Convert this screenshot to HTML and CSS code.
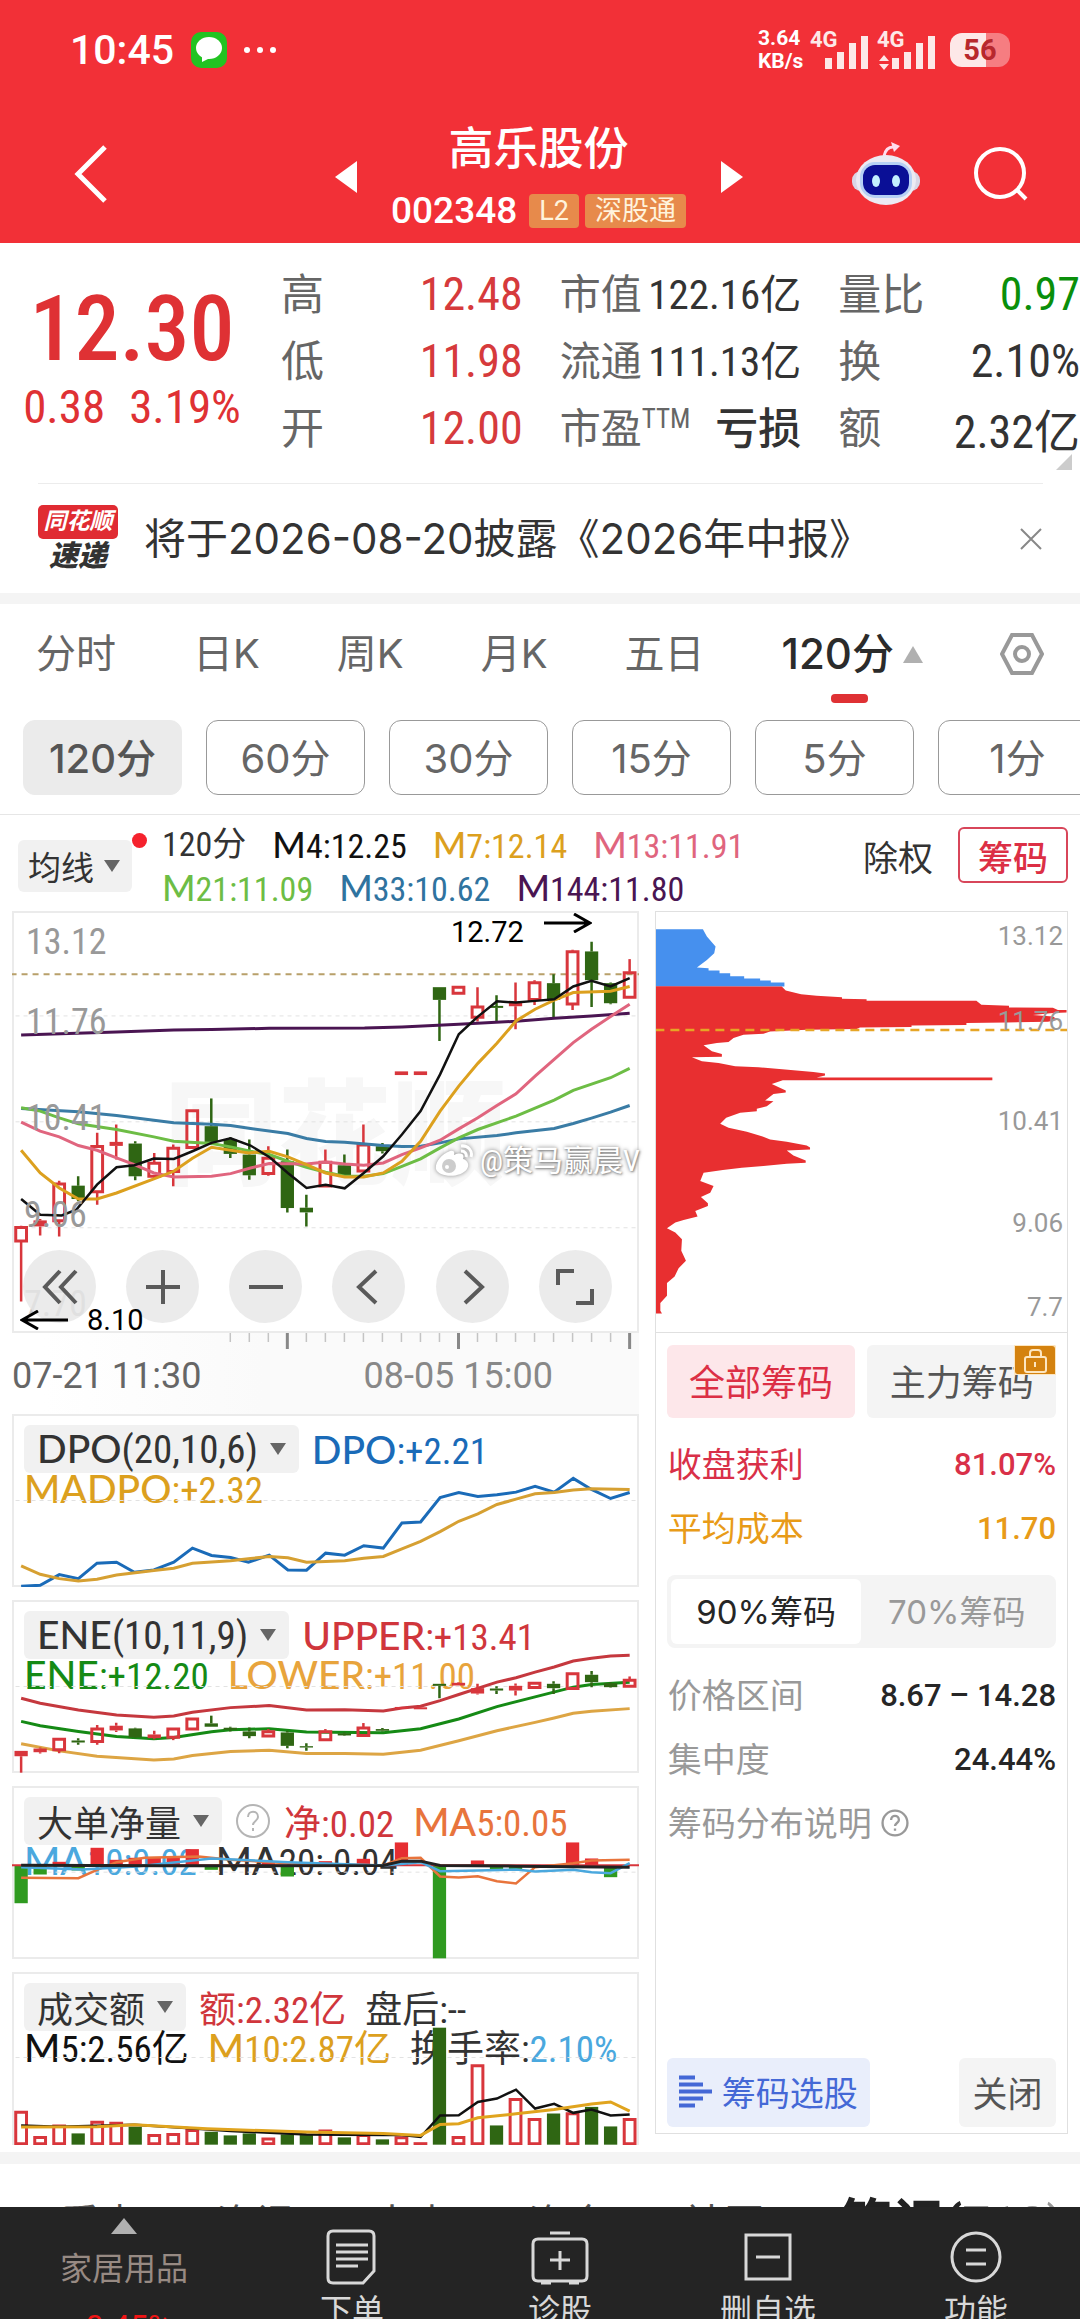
FILE: index.html
```
<!DOCTYPE html>
<html lang="zh-CN">
<head>
  <meta charset="UTF-8" />
  <meta name="viewport" content="width=device-width, initial-scale=1" />
  <title>高乐股份 002348</title>
  <link rel="stylesheet" href="styles.css">
</head>
<body>
  <header class="top">
    <div class="status">
      <div class="status-left">
        <span class="clock">10:45</span>
        <svg class="msg" viewBox="0 0 36 36"><rect width="36" height="36" rx="10" fill="#22c322"/><ellipse cx="18" cy="16" rx="13" ry="11" fill="#fff"/><path d="M11 23l0 7 8-4z" fill="#fff"/></svg>
        <svg class="dots" viewBox="0 0 32 6"><circle cx="3" cy="3" r="3"/><circle cx="16" cy="3" r="3"/><circle cx="29" cy="3" r="3"/></svg>
      </div>
      <div class="status-right">
        <span class="speed">3.64<br>KB/s</span>
        <svg class="signal" viewBox="0 0 58 40">
          <text x="0" y="17">4G</text>
          <path d="M15 28h7v11h-7zM27 22h7v17h-7zM39 13h7v26h-7zM51 6h7v33h-7z"/>
        </svg>
        <svg class="signal" viewBox="0 0 58 40">
          <text x="0" y="17">4G</text>
          <path d="M7 25l5 6H2zM7 40l5-6H2zM15 28h7v11h-7zM27 22h7v17h-7zM39 13h7v26h-7zM51 6h7v33h-7z"/>
        </svg>
        <div class="battery"><span>56</span></div>
      </div>
    </div>
    <div class="title-bar">
      <button class="icon-btn back" aria-label="返回"><svg viewBox="0 0 34 58"><path d="M31 2L4 29l27 27"/></svg></button>
      <div class="stock">
        <button class="icon-btn" aria-label="上一只"><svg class="arrow" viewBox="0 0 22 32"><path d="M22 0v32L0 16z"/></svg></button>
        <div class="stock-name">
          <h1>高乐股份</h1>
          <div class="code"><span>002348</span><em>L2</em><em>深股通</em></div>
        </div>
        <button class="icon-btn" aria-label="下一只"><svg class="arrow" viewBox="0 0 22 32"><path d="M0 0v32l22-16z"/></svg></button>
      </div>
      <div class="tools">
        <button class="icon-btn" aria-label="助手">
          <svg class="robot" viewBox="0 0 70 64">
            <path d="M33 14q2-9 9-9" fill="none" stroke="#fde" stroke-width="3"/>
            <path d="M40 0l9 4-6 6z" fill="#fde"/>
            <rect x="1" y="29" width="68" height="20" rx="9" fill="#d9d6e6"/>
            <ellipse cx="35" cy="38" rx="30" ry="25" fill="#eceaf3"/>
            <rect x="9" y="20" width="52" height="36" rx="15" fill="#b6d0f5"/>
            <rect x="12" y="23" width="46" height="30" rx="12" fill="#0a0f96"/>
            <ellipse cx="25" cy="39" rx="4" ry="6" fill="#c4f0ff"/>
            <ellipse cx="45" cy="39" rx="4" ry="6" fill="#c4f0ff"/>
          </svg>
        </button>
        <button class="icon-btn" aria-label="搜索"><svg class="search" viewBox="0 0 56 56"><circle cx="27" cy="27" r="24"/><path d="M44 44l9 9"/></svg></button>
      </div>
    </div>
  </header>

  <section class="quote">
    <div class="price">
      <strong>12.30</strong>
      <div><span>0.38</span><span>3.19%</span></div>
    </div>
    <dl>
      <div><dt>高</dt><dd class="up">12.48</dd></div>
      <div><dt>低</dt><dd class="up">11.98</dd></div>
      <div><dt>开</dt><dd class="up">12.00</dd></div>
    </dl>
    <dl class="mid">
      <div><dt>市值</dt><dd>122.16亿</dd></div>
      <div><dt>流通</dt><dd>111.13亿</dd></div>
      <div><dt>市盈<sup>TTM</sup></dt><dd>亏损</dd></div>
    </dl>
    <dl>
      <div><dt>量比</dt><dd class="down">0.97</dd></div>
      <div><dt>换</dt><dd>2.10%</dd></div>
      <div><dt>额</dt><dd>2.32亿</dd></div>
    </dl>
    <i class="corner"></i>
  </section>

  <section class="notice">
    <div class="brand"><b>同花顺</b><i>速递</i></div>
    <p>将于2026-08-20披露《2026年中报》</p>
    <button class="icon-btn" aria-label="关闭提示"><svg viewBox="0 0 22 22"><path d="M1 1l20 20M21 1L1 21"/></svg></button>
  </section>

  <nav class="periods">
    <a href="#">分时</a><a href="#">日K</a><a href="#">周K</a><a href="#">月K</a><a href="#">五日</a>
    <a href="#" class="active">120分<i class="tri-up"></i></a>
    <button class="icon-btn" aria-label="设置"><svg viewBox="0 0 44 44"><path d="M12 3h20l10 19-10 19H12L2 22z"/><circle cx="22" cy="22" r="7"/></svg></button>
  </nav>
  <div class="chips">
    <button class="on">120分</button><button>60分</button><button>30分</button><button>15分</button><button>5分</button><button>1分</button>
  </div>

  <section class="ma-bar">
    <button class="drop ma-btn">均线<i class="tri-down"></i><i class="dot"></i></button>
    <div class="ma-list">
      <div><span>120分</span><span class="black"><b>M</b>4:12.25</span><span class="gold"><b>M</b>7:12.14</span><span class="pink"><b>M</b>13:11.91</span></div>
      <div><span class="lime"><b>M</b>21:11.09</span><span class="blue"><b>M</b>33:10.62</span><span class="purple"><b>M</b>144:11.80</span></div>
    </div>
    <button class="plain">除权</button>
    <button class="outlined">筹码</button>
  </section>

  <main class="board">
    <div class="charts">
      <div class="kline">
        <span class="wm">同花顺</span>
        <svg id="kline" viewBox="30 36 1511 1263" preserveAspectRatio="none"></svg>
        <span class="axis a1">13.12</span>
        <span class="axis a2">11.76</span>
        <span class="axis a3">10.41</span>
        <span class="axis a4">9.06</span>
        <span class="axis a5">7.70</span>
        <span class="mark high">12.72<svg viewBox="0 0 48 20"><path d="M0 10h46M30 1l16 9-16 9"/></svg></span>
        <div class="pad">
          <button aria-label="收起"><svg viewBox="0 0 40 40"><path d="M20 4L5 20l15 16M36 4L21 20l15 16"/></svg></button>
          <button aria-label="放大"><svg viewBox="0 0 40 40"><path d="M3 20h34M20 3v34"/></svg></button>
          <button aria-label="缩小"><svg viewBox="0 0 40 40"><path d="M3 20h34"/></svg></button>
          <button aria-label="左移"><svg viewBox="0 0 40 40"><path d="M27 4L10 20l17 16"/></svg></button>
          <button aria-label="右移"><svg viewBox="0 0 40 40"><path d="M13 4l17 16-17 16"/></svg></button>
          <button aria-label="全屏"><svg viewBox="0 0 40 40"><path d="M3 18V4h16M37 22v14H21"/></svg></button>
        </div>
        <span class="mark low"><svg viewBox="0 0 48 20"><path d="M48 10H2M18 1L2 10l16 9"/></svg>8.10</span>
        <span class="weibo"><svg viewBox="0 0 40 36"><path d="M16 8C6 12 1 20 2 26c2 8 24 10 31 0 3-5 0-9-4-10 2-5-2-7-9-4 1-4-1-5-4-4z"/><circle cx="15" cy="23" r="7" class="eye"/><circle cx="13" cy="24" r="2"/><path d="M27 3c7-1 12 5 10 11M27 8c4 0 6 3 5 6" class="wave"/></svg>@策马赢晨V</span>
      </div>
      <div class="time-axis">
        <svg id="ticks" viewBox="30 0 1511 60" preserveAspectRatio="none"></svg>
        <div><span>07-21 11:30</span><span>08-05 15:00</span></div>
      </div>

      <div class="panel">
        <div class="legend"><button class="drop latin"><span><b>DPO</b>(20,10,6)</span><i class="tri-down"></i></button><span class="azure"><b>DPO</b>:+2.21</span></div>
        <div class="legend"><span class="gold"><b>MADPO</b>:+2.32</span></div>
        <svg id="dpo" viewBox="30 42 1511 516" preserveAspectRatio="none"></svg>
      </div>
      <div class="panel">
        <div class="legend"><button class="drop latin"><span><b>ENE</b>(10,11,9)</span><i class="tri-down"></i></button><span class="red"><b>UPPER</b>:+13.41</span></div>
        <div class="legend"><span class="green"><b>ENE</b>:+12.20</span><span class="amber"><b>LOWER</b>:+11.00</span></div>
        <svg id="ene" viewBox="30 600 1511 516" preserveAspectRatio="none"></svg>
      </div>
      <div class="panel">
        <div class="legend"><button class="drop">大单净量<i class="tri-down"></i></button><svg class="help" viewBox="0 0 36 36"><circle cx="18" cy="18" r="16"/><path d="M13 14c0-7 10-7 10 0 0 4-5 4-5 8M18 25v3"/></svg><span class="red">净:0.02</span><span class="orange"><b>MA</b>5:0.05</span></div>
        <div class="legend"><span class="sky"><b>MA</b>10:0.02</span><span><b>MA</b>20:-0.04</span></div>
        <svg id="net" viewBox="30 47 1511 518" preserveAspectRatio="none"></svg>
      </div>
      <div class="panel last">
        <div class="legend"><button class="drop">成交额<i class="tri-down"></i></button><span class="red">额:2.32亿</span><span>盘后:--</span></div>
        <div class="legend"><span class="black"><b>M</b>5:2.56亿</span><span class="gold"><b>M</b>10:2.87亿</span><span>换手率:<span class="sky">2.10%</span></span></div>
        <svg id="vol" viewBox="30 605 1511 522" preserveAspectRatio="none"></svg>
      </div>
    </div>

    <aside class="chip-side">
      <div class="profile">
        <svg id="profile" viewBox="47 36 1236 1263" preserveAspectRatio="none"></svg>
        <span class="axis a1">13.12</span>
        <span class="axis a2">11.76</span>
        <span class="axis a3">10.41</span>
        <span class="axis a4">9.06</span>
        <span class="axis a5">7.7</span>
      </div>
      <div class="chip-body">
        <div class="chip-tabs">
          <button class="on">全部筹码</button>
          <button>主力筹码<svg class="lock" viewBox="0 0 42 30"><path d="M0 0h38a4 4 0 014 4v26H4a4 4 0 01-4-4z" fill="#d4820f"/><rect x="11" y="12" width="21" height="15" rx="2"/><path d="M16 12V8q0-3 3-3h5q3 0 3 3v4M21 17v5"/></svg></button>
        </div>
        <div class="row rose"><span>收盘获利</span><b>81.07%</b></div>
        <div class="row honey"><span>平均成本</span><b>11.70</b></div>
        <div class="seg"><button class="on">90%筹码</button><button>70%筹码</button></div>
        <div class="row"><span>价格区间</span><b>8.67 – 14.28</b></div>
        <div class="row"><span>集中度</span><b>24.44%</b></div>
        <div class="row explain"><span>筹码分布说明</span><svg class="help" viewBox="0 0 36 36"><circle cx="18" cy="18" r="16"/><path d="M13 14c0-7 10-7 10 0 0 4-5 4-5 8M18 25v3"/></svg></div>
        <div class="actions">
          <button class="pick"><svg viewBox="0 0 33 33"><path d="M0 2.500h16M0 9.500h24M0 16.500h33M0 23.500h24M0 30.500h16"/></svg>筹码选股</button>
          <button class="close">关闭</button>
        </div>
      </div>
    </aside>
  </main>

  <nav class="more">
    <a href="#">看点</a><a href="#">资讯</a><a href="#">大事</a><a href="#">资金</a><a href="#">社区</a><a href="#" class="active">笔记(<small>712)</small></a>
  </nav>

  <footer class="dock">
    <a href="#" class="sector"><i class="tri-up"></i><span>家居用品</span><em>-0.45%</em></a>
    <a href="#"><svg viewBox="0 0 54 56"><path d="M8 2h36q5 0 5 5v35L38 54H8q-5 0-5-5V7q0-5 5-5zM11 16h32M11 23h32M11 30h32M11 37h22"/></svg><span>下单</span></a>
    <a href="#"><svg viewBox="0 0 58 56"><path d="M19 4h20M7 10h44q5 0 5 5v32q0 5-5 5H7q-5 0-5-5V15q0-5 5-5zM29 22v19M19 31h20M10 54h10M38 54h10"/></svg><span>诊股</span></a>
    <a href="#"><svg viewBox="0 0 54 56"><path d="M5 6h44v44H5zM15 28h24"/></svg><span>删自选</span></a>
    <a href="#"><svg viewBox="0 0 54 56"><circle cx="27" cy="28" r="24"/><path d="M17 21h20M17 35h20"/></svg><span>功能</span></a>
  </footer>

  <script src="script.js"></script>
</body>
</html>
```
FILE: styles.css
```
* {
  box-sizing: border-box;
}

body {
  margin: 0;
  min-height: 100vh;
  overflow: hidden;
  background: #fff;
  color: #333;
  font-family: "Roboto Condensed", Roboto, "Noto Sans CJK SC", sans-serif;
}

h1, p, dl, dd {
  margin: 0;
}

button {
  border: none;
  background: none;
  padding: 0;
  color: inherit;
  font: inherit;
  cursor: pointer;
}

a {
  color: inherit;
  text-decoration: none;
}

em, i {
  font-style: normal;
}

svg {
  display: block;
  flex: none;
}

.icon-btn {
  flex: none;
}

/* Header */
.top {
  background: #f23037;
  color: #fff;
}

.status {
  display: flex;
  justify-content: space-between;
  align-items: center;
  height: 100px;
  padding: 0 70px;
  font-family: Roboto, sans-serif;
  font-weight: 500;
}

.status-left, .status-right {
  display: flex;
  align-items: center;
}

.status-left {
  gap: 17px;
}

.status-right {
  gap: 4px;
}

.clock {
  font-size: 41px;
}

.msg {
  width: 36px;
  height: 36px;
}

.dots {
  width: 32px;
  fill: #fff;
}

.speed {
  width: 48px;
  font-size: 21px;
  line-height: 23px;
  font-weight: 700;
  white-space: nowrap;
}

.signal {
  width: 58px;
  height: 40px;
  margin-right: 5px;
  overflow: visible;
  fill: #fde8e8;
  font: 700 22px Roboto, sans-serif;
}

.battery {
  width: 60px;
  height: 34px;
  margin-left: 6px;
  border-radius: 12px;
  background: linear-gradient(90deg, #fde8e8 60%, #f67d81 60%);
  color: #b8282d;
  text-align: center;
  font-size: 29px;
  line-height: 34px;
  font-weight: 700;
}

.title-bar {
  display: grid;
  grid-template-columns: 1fr 408px 1fr;
  align-items: center;
  height: 143px;
  padding: 5px 51px 0 74px;
}

.back {
  justify-self: start;
}

.back svg {
  width: 34px;
  height: 58px;
  fill: none;
  stroke: #fff;
  stroke-width: 5;
}

.stock {
  display: flex;
  justify-content: space-between;
  align-items: center;
  margin-left: -13px;
  margin-right: 13px;
}

.arrow {
  width: 22px;
  height: 32px;
  margin-top: 6px;
  fill: #fff;
}

.stock-name {
  text-align: center;
}

.stock-name h1 {
  font-size: 45px;
  line-height: 60px;
  font-weight: 500;
}

.code {
  display: flex;
  align-items: center;
  gap: 6px;
  margin-top: 13px;
  font: 500 37px/36px Roboto, sans-serif;
}

.code span {
  margin-right: 6px;
}

.code em {
  padding: 0 10px;
  border-radius: 4px;
  background: #e78a4b;
  color: #fff3dc;
  font: 400 27px/34px Roboto, "Noto Sans CJK SC", sans-serif;
}

.tools {
  display: flex;
  justify-content: flex-end;
  align-items: center;
  gap: 52px;
}

.robot {
  width: 70px;
  height: 64px;
}

.search {
  width: 56px;
  height: 56px;
  fill: none;
  stroke: #fff;
  stroke-width: 4;
}

/* Quote */
.quote {
  position: relative;
  display: flex;
  gap: 37px;
  padding: 17px 0 23px;
}

.quote::after {
  content: "";
  position: absolute;
  left: 38px;
  right: 37px;
  bottom: 0;
  border-bottom: 1px solid #ececec;
}

.price {
  width: 244px;
  padding: 20px 0 0 20px;
  color: #df3134;
  text-align: center;
  white-space: nowrap;
}

.price strong {
  display: block;
  font-size: 90px;
  line-height: 100px;
  font-weight: 500;
}

.price div {
  display: flex;
  justify-content: center;
  gap: 24px;
  font-size: 47px;
  line-height: 54px;
}

.quote dl {
  flex: 1;
}

.quote dl div {
  display: flex;
  justify-content: space-between;
  align-items: center;
  height: 67px;
  white-space: nowrap;
}

.quote dt {
  padding-bottom: 6px;
  color: #666;
  font-size: 43px;
}

.quote dd {
  font-size: 46px;
}

.mid dt {
  font-size: 41px;
}

.quote .mid dd {
  padding-bottom: 6px;
  font-size: 41px;
}

.quote .mid div:last-child dd {
  font-size: 43px;
  font-weight: 500;
}

.quote sup {
  font-size: 27px;
  line-height: 0;
}

.quote .up {
  color: #d63a3c;
}

.quote .down {
  color: #0a8f0a;
}

.corner {
  position: absolute;
  right: 8px;
  bottom: 14px;
  border-left: 16px solid transparent;
  border-bottom: 16px solid #ccc;
}

/* Notice */
.notice {
  display: flex;
  align-items: center;
  height: 120px;
  padding: 0 38px;
  border-bottom: 11px solid #f4f4f4;
}

.brand {
  width: 80px;
  margin-right: 26px;
  text-align: center;
  white-space: nowrap;
}

.brand b {
  display: block;
  border-radius: 5px;
  background: #e02b32;
  color: #fff;
  font-size: 23px;
  line-height: 34px;
  font-weight: 700;
  font-style: italic;
}

.brand i {
  display: block;
  font-size: 29px;
  line-height: 34px;
  font-weight: 900;
  font-style: italic;
}

.notice p {
  flex: 1;
  font: 42px/60px Inter, "Noto Sans CJK SC", sans-serif;
}

.notice svg {
  width: 22px;
  height: 22px;
  stroke: #888;
  stroke-width: 2;
}

/* Period tabs */
.periods {
  display: flex;
  justify-content: space-between;
  align-items: center;
  height: 98px;
  padding: 2px 36px 0;
  color: #666;
  font: 40px/56px Inter, "Noto Sans CJK SC", sans-serif;
}

.periods .active {
  position: relative;
  display: flex;
  align-items: center;
  gap: 9px;
  color: #2b2b2b;
  font-size: 42px;
  font-weight: 500;
}

.periods .active::after {
  content: "";
  position: absolute;
  left: 49px;
  bottom: -21px;
  width: 37px;
  height: 9px;
  border-radius: 4px;
  background: #df3134;
}

.periods svg {
  width: 44px;
  height: 44px;
  fill: none;
  stroke: #999;
  stroke-width: 4;
}

.tri-up {
  border: 10px solid transparent;
  border-top: none;
  border-bottom: 17px solid #b0b0b0;
}

.tri-down {
  border: 8px solid transparent;
  border-bottom: none;
  border-top: 12px solid #666;
}

.chips {
  display: flex;
  gap: 24px;
  padding: 18px 0 19px 23px;
  overflow: hidden;
  border-bottom: 1px solid #e6e6e6;
}

.chips button {
  flex: none;
  width: 159px;
  height: 75px;
  padding-top: 2px;
  border: 1px solid #999;
  border-radius: 12px;
  color: #666;
  font: 40px/56px Inter, "Noto Sans CJK SC", sans-serif;
}

.chips .on {
  border-color: #ebebeb;
  background: #ebebeb;
  color: #555;
  font-weight: 500;
}

/* Moving average legend */
.ma-bar {
  display: flex;
  align-items: flex-start;
  height: 96px;
  padding: 9px 12px 0 18px;
  white-space: nowrap;
}

.drop {
  display: flex;
  align-items: center;
  gap: 12px;
  border-radius: 6px;
  background: #f1f1f1;
}

.ma-btn {
  position: relative;
  width: 114px;
  height: 52px;
  margin: 16px 30px 0 0;
  padding-left: 10px;
  gap: 10px;
  font-size: 33px;
}

.dot {
  position: absolute;
  right: -15px;
  top: -7px;
  width: 15px;
  height: 15px;
  border-radius: 50%;
  background: #f5222d;
}

.ma-list {
  flex: 1;
  font-size: 34px;
  line-height: 41px;
}

.ma-list div {
  display: flex;
  gap: 26px;
}

.ma-list b, .panel b {
  font-family: Lato, sans-serif;
  font-weight: 500;
}

.ma-list b {
  font-size: 36px;
}

.panel b {
  font-size: 39px;
}

.plain, .outlined {
  height: 56px;
  margin-top: 3px;
  font-size: 35px;
}

.outlined {
  width: 110px;
  margin-left: 25px;
  border: 2px solid #d8465a;
  border-radius: 6px;
  color: #dc2f45;
  font-weight: 500;
}

.black { color: #111; }
.gold { color: #dca01e; }
.pink { color: #e0657e; }
.lime { color: #6dbd45; }
.blue { color: #2f739f; }
.purple { color: #4a1552; }
.azure { color: #1a6bb8; }
.red { color: #d0363c; }
.green { color: #158a15; }
.amber { color: #e8a43c; }
.orange { color: #e8743c; }
.sky { color: #4aa8de; }

/* Charts */
.board {
  display: flex;
  gap: 16px;
  padding: 0 12px 7px;
  border-bottom: 12px solid #f4f4f4;
}

.charts {
  flex: 628 1 0;
  min-width: 0;
}

.kline, .panel {
  position: relative;
  border: 2px solid #ebebeb;
}

.kline {
  height: 422px;
}

.kline > svg, .panel > svg {
  position: absolute;
  left: -2px;
  top: -2px;
  width: calc(100% + 4px);
  height: calc(100% + 4px);
  pointer-events: none;
}

.profile > svg {
  position: absolute;
  left: 0;
  top: 0;
  width: 100%;
  height: 100%;
}

.panel.last > svg {
  height: calc(100% + 2px);
}

.wm {
  position: absolute;
  left: 150px;
  top: 130px;
  color: #f7f7f7;
  font-size: 114px;
  font-weight: 900;
}

.axis {
  position: absolute;
  color: #999;
  font-size: 36px;
  line-height: 40px;
}

.kline .axis { left: 12px; }
.kline .a4, .kline .a5 { left: 10px; }
.kline .a5 { color: #c8c8c8; }
.axis.a1 { top: 9px; }
.axis.a2 { top: 89px; }
.axis.a3 { top: 185px; }
.axis.a4 { top: 282px; }
.axis.a5 { top: 371px; }

.mark {
  position: absolute;
  display: flex;
  align-items: center;
  color: #000;
  font: 29px/34px Roboto, sans-serif;
}

.mark svg {
  width: 48px;
  height: 20px;
  fill: none;
  stroke: #000;
  stroke-width: 3;
}

.high {
  left: 437px;
  top: 0;
  gap: 20px;
}

.high svg {
  margin-bottom: 18px;
}

.low {
  left: 6px;
  bottom: -6px;
  gap: 19px;
}

.pad {
  position: absolute;
  left: 9px;
  right: 25px;
  bottom: 8px;
  display: flex;
  justify-content: space-between;
}

.pad button {
  display: grid;
  place-items: center;
  width: 73px;
  height: 73px;
  border-radius: 50%;
  background: rgba(230, 230, 230, 0.8);
}

.pad svg {
  width: 40px;
  height: 40px;
  fill: none;
  stroke: #5a5a5a;
  stroke-width: 4;
}

.weibo {
  position: absolute;
  right: -3px;
  top: 228px;
  display: flex;
  align-items: center;
  gap: 6px;
  color: #fff;
  font-size: 30px;
  line-height: 40px;
  text-shadow: 0 0 4px #777, 1px 1px 2px #999;
}

.weibo svg {
  width: 40px;
  height: 36px;
  fill: #fff;
  filter: drop-shadow(0 0 2px #888);
}

.weibo .eye {
  fill: #ccc;
}

.weibo .wave {
  fill: none;
  stroke: #fff;
  stroke-width: 3;
}

.time-axis {
  height: 81px;
  color: #666;
  background: linear-gradient(90deg, #fff 5%, #fafafa 40%);
}

.time-axis svg {
  width: 100%;
  height: 20px;
}

.time-axis div {
  display: flex;
  gap: 162px;
  padding-top: 1px;
  font: 36px/44px Roboto, sans-serif;
}

.time-axis span + span {
  color: #888;
}

.panel {
  height: 173px;
  margin-bottom: 13px;
  padding: 9px 0 0 10px;
}

.panel.last {
  margin-bottom: 0;
  border-bottom: none;
}

.legend {
  display: flex;
  align-items: center;
  gap: 19px;
  height: 30px;
  font-size: 37px;
  white-space: nowrap;
}

.legend:first-child {
  height: 48px;
  gap: 13px;
}

.legend:first-child span + span {
  margin-left: 6px;
}

.legend .drop {
  height: 48px;
  padding: 0 13px;
  font-size: 36px;
}

.legend .latin {
  font-size: 39px;
}

.help {
  width: 36px;
  height: 36px;
  fill: none;
  stroke: #b5b5b5;
  stroke-width: 2;
}

/* Chip distribution */
.chip-side {
  flex: 412 1 0;
  min-width: 0;
  display: flex;
  flex-direction: column;
  margin-bottom: 11px;
  border: 1px solid #e0e0e0;
}

.profile {
  position: relative;
  height: 421px;
  border-bottom: 1px solid #e0e0e0;
}

.profile .axis {
  right: 4px;
  font: 26px/40px Roboto, sans-serif;
}

.profile .a1 { top: 4px; }
.profile .a3 { top: 189px; }
.profile .a4 { top: 291px; }
.profile .a5 { top: 375px; }

.chip-body {
  flex: 1;
  display: flex;
  flex-direction: column;
  padding: 12px 11px 6px;
}

.chip-tabs {
  display: flex;
  gap: 12px;
  margin-bottom: 14px;
}

.chip-tabs button {
  position: relative;
  flex: 1;
  height: 73px;
  padding-bottom: 4px;
  border-radius: 6px;
  background: #f4f4f4;
  color: #555;
  font-size: 36px;
}

.chip-tabs .on {
  background: #fde7ea;
  color: #dc2f45;
}

.lock {
  position: absolute;
  right: 0;
  top: 0;
  width: 42px;
  height: 30px;
  fill: none;
  stroke: #fde6c0;
  stroke-width: 2;
}

.row {
  display: flex;
  justify-content: space-between;
  align-items: center;
  height: 64px;
  padding-left: 1px;
  color: #999;
  font-size: 34px;
}

.row span {
  padding-bottom: 3px;
}

.row b {
  padding-top: 2px;
  color: #262626;
  font: 500 31px/40px Roboto, sans-serif;
}

.rose, .rose b { color: #d93048; }
.honey, .honey b { color: #e89b18; }

.explain {
  justify-content: flex-start;
  gap: 9px;
}

.explain .help {
  width: 28px;
  height: 28px;
  stroke: #999;
  stroke-width: 3;
}

.seg {
  display: flex;
  height: 73px;
  margin: 15px 0;
  padding: 4px;
  border-radius: 8px;
  background: #f4f4f4;
  color: #999;
  font: 33px/48px Inter, "Noto Sans CJK SC", sans-serif;
}

.seg button {
  flex: 1;
  border-radius: 6px;
}

.seg .on {
  background: #fff;
  color: #262626;
}

.actions {
  display: flex;
  justify-content: space-between;
  margin-top: auto;
}

.actions button {
  height: 69px;
  padding-bottom: 3px;
  border-radius: 6px;
  background: #f4f4f4;
  color: #555;
  font-size: 35px;
}

.actions .close {
  width: 97px;
}

.actions .pick {
  display: flex;
  align-items: center;
  gap: 10px;
  padding: 0 12px 3px;
  background: #e9eefb;
  color: #4468d6;
  font-size: 34px;
}

.pick svg {
  width: 33px;
  height: 33px;
  stroke: #4468d6;
  stroke-width: 4;
}

/* Lower tabs and dock */
.more {
  display: flex;
  justify-content: space-between;
  align-items: flex-start;
  padding: 31px 16px 0 60px;
  color: #555;
  font-size: 40px;
  line-height: 60px;
  white-space: nowrap;
}

.more .active {
  color: #222;
  font-family: Roboto, "Noto Sans CJK SC", sans-serif;
  font-size: 52px;
  font-weight: 700;
}

.more small {
  color: #999;
  font-size: 50px;
  font-weight: 400;
}

.dock {
  position: fixed;
  left: 0;
  right: 0;
  bottom: 0;
  display: flex;
  height: 112px;
  overflow: hidden;
  background: #242424;
  color: #d8d8d8;
  font-size: 32px;
  line-height: 44px;
}

.dock a {
  flex: 1;
  display: flex;
  flex-direction: column;
  align-items: center;
  gap: 4px;
  padding-top: 22px;
  white-space: nowrap;
}

.dock svg {
  height: 56px;
  fill: none;
  stroke: #d8d8d8;
  stroke-width: 3;
}

.dock .sector {
  flex: 0 0 248px;
  gap: 13px;
  padding-top: 11px;
  color: #978a83;
}

.dock .tri-up {
  border-left-width: 13px;
  border-right-width: 13px;
  border-bottom-width: 16px;
}

.dock em {
  color: #f01414;
  font-family: Roboto, sans-serif;
}
```
FILE: script.js
```
const NS = 'http://www.w3.org/2000/svg';
const RED = '#d8363c';
const GREEN = '#2f6613';
const STEP = 45.84;

function add(id, tag, attrs) {
  const el = document.createElementNS(NS, tag);
  for (const key in attrs) el.setAttribute(key, attrs[key]);
  el.setAttribute('vector-effect', 'non-scaling-stroke');
  document.getElementById(id).appendChild(el);
}

function line(id, color, points, width) {
  add(id, 'polyline', { points, fill: 'none', stroke: color, 'stroke-width': width || 2.5 });
}

function dash(id, y, color, pattern, width) {
  add(id, 'path', { d: `M0 ${y}H1600`, stroke: color, 'stroke-dasharray': pattern, 'stroke-width': width || 1 });
}

function x(i) {
  return 52 + i * STEP;
}

// each candle: type (r hollow, s solid red, g green), high, body top, body bottom, low
function candles(id, rows) {
  rows.forEach(([type, high, top, bottom, low], i) => {
    const color = type === 'g' ? GREEN : RED;
    add(id, 'path', { d: `M${x(i)} ${high}V${top}M${x(i)} ${bottom}V${low}`, stroke: color, 'stroke-width': 2.5 });
    const hollow = type === 'r';
    const pad = hollow ? 3 : 0;
    add(id, 'rect', {
      x: x(i) - 16 + pad, y: top + pad, width: 32 - pad * 2, height: Math.max(bottom - top - pad * 2, 1),
      fill: hollow ? 'none' : color, stroke: hollow ? color : 'none', 'stroke-width': 3
    });
  });
}

// K line
dash('kline', 225, '#b8a06a', '6 5', 2);
[350, 667, 984].forEach(y => dash('kline', y, '#e2e2e2', '4 4'));
candles('kline', [
  ['r', 978, 980, 1027, 1205], ['s', 958, 962, 980, 1007], ['r', 843, 850, 966, 1010], ['g', 830, 858, 898, 905],
  ['r', 700, 738, 879, 915], ['s', 675, 727, 739, 780], ['g', 725, 732, 830, 842], ['r', 760, 788, 833, 835],
  ['r', 735, 743, 819, 860], ['r', 631, 631, 747, 747], ['g', 597, 680, 727, 727], ['g', 713, 720, 763, 775],
  ['g', 720, 765, 827, 840], ['r', 740, 773, 825, 828], ['g', 750, 785, 925, 938], ['g', 885, 924, 938, 980],
  ['r', 750, 785, 862, 862], ['g', 765, 797, 827, 830], ['r', 675, 733, 817, 817], ['g', 730, 740, 755, 762],
  ['s', 516, 516, 527, 527], ['s', 516, 516, 527, 527], ['g', 264, 264, 302, 425], ['r', 261, 261, 285, 285],
  ['r', 264, 320, 357, 367], ['g', 288, 320, 326, 367], ['s', 250, 311, 321, 390], ['r', 243, 248, 304, 317],
  ['g', 225, 252, 302, 353], ['r', 152, 155, 317, 332], ['g', 128, 157, 243, 323], ['g', 250, 252, 312, 315],
  ['r', 180, 218, 297, 297]
]);
line('kline', '#4a1552', '52,407 282,398 420,392 511,391 650,387 880,386 970,383 1107,375 1245,366 1337,357 1427,350 1519,342', 3);
line('kline', '#3a7ca5', '52,627 190,637 282,648 372,662 420,670 511,674 557,678 605,687 695,702 740,717 786,726 832,728 925,738 970,741 1015,740 1062,730 1107,718 1199,708 1245,700 1337,687 1383,672 1427,656 1473,638 1519,618', 3);
line('kline', '#6dbd45', '52,625 98,635 144,655 190,673 282,690 372,712 420,725 511,732 557,742 605,755 650,765 695,785 740,803 786,818 832,830 878,830 925,822 970,800 1015,778 1062,745 1107,715 1153,690 1245,650 1337,602 1383,573 1473,535 1519,507', 3);
line('kline', '#e0657e', '52,668 98,695 144,712 190,738 235,752 282,775 325,795 372,820 420,832 511,830 557,822 605,805 650,792 740,793 786,787 832,793 878,797 925,790 970,765 1015,745 1062,722 1107,688 1153,655 1199,618 1245,583 1291,530 1337,480 1383,430 1427,390 1473,352 1519,315', 3);
line('kline', '#dca01e', '52,752 98,820 144,865 190,898 235,898 282,880 372,838 420,815 465,776 511,743 600,760 650,755 695,772 740,795 786,820 832,832 878,832 925,820 970,785 1015,725 1062,635 1107,560 1153,492 1199,432 1245,365 1291,330 1337,303 1383,280 1473,276 1519,262', 3);
line('kline', '#111', '52,898 98,945 150,947 185,930 235,855 282,803 325,797 372,777 420,778 465,755 511,730 557,716 605,738 650,772 695,820 740,865 786,855 832,866 878,820 925,770 970,705 1015,635 1062,525 1107,405 1153,352 1199,306 1245,310 1291,305 1337,300 1383,262 1427,245 1473,262 1519,237');

// time ticks
for (let i = 11; i < 33; i++) {
  const major = i === 14 || i === 23 || i === 32;
  add('ticks', 'path', { d: `M${x(i)} 0V${major ? 48 : 27}`, stroke: major ? '#888' : '#c4c4c4', 'stroke-width': major ? 3 : 1.5 });
}

// DPO
dash('dpo', 300, '#e2e2e2', '4 4');
line('dpo', '#1a6bb8', '52,556 98,553 144,521 190,533 235,487 282,484 325,514 372,507 420,484 465,442 511,464 557,470 600,484 650,463 695,507 740,508 786,457 832,463 878,435 925,442 970,367 1015,364 1062,291 1107,276 1153,288 1199,283 1245,275 1291,258 1337,275 1383,234 1427,267 1473,294 1519,276', 3);
line('dpo', '#d6a032', '52,495 98,520 144,533 190,540 235,535 282,522 372,509 420,502 465,487 557,480 605,473 650,467 695,471 740,484 832,480 878,472 925,467 970,444 1015,422 1062,393 1107,362 1153,340 1199,312 1245,296 1291,280 1337,276 1383,269 1427,265 1519,267', 3);

// ENE
dash('ene', 858, '#e2e2e2', '4 4');
line('ene', '#c5383e', '52,893 98,908 190,928 282,943 372,950 420,946 465,935 557,921 650,915 740,928 832,927 925,931 970,922 1015,917 1062,900 1107,882 1199,845 1245,832 1291,815 1337,800 1383,782 1427,774 1473,767 1519,765', 3);
line('ene', '#158a15', '52,962 98,975 190,992 282,1007 372,1014 420,1010 511,993 557,987 650,984 740,994 925,996 1015,984 1107,955 1199,918 1291,889 1383,860 1427,852 1519,845', 3);
line('ene', '#dda544', '52,1029 144,1050 235,1066 372,1077 420,1074 465,1064 557,1052 650,1048 740,1058 832,1058 925,1060 1015,1048 1107,1020 1199,990 1291,965 1337,952 1383,938 1427,932 1519,924', 3);
candles('ene', [
  ['s', 1050, 1050, 1066, 1115], ['s', 1040, 1043, 1054, 1058], ['r', 1012, 1012, 1050, 1057], ['g', 1012, 1019, 1025, 1032],
  ['r', 973, 982, 1025, 1032], ['s', 966, 975, 989, 994], ['g', 981, 983, 1010, 1012], ['s', 990, 1001, 1012, 1015],
  ['r', 982, 982, 1012, 1018], ['r', 952, 952, 988, 988], ['g', 945, 968, 978, 978], ['g', 978, 981, 987, 992],
  ['g', 980, 992, 1006, 1012], ['r', 985, 990, 1009, 1009], ['g', 990, 995, 1035, 1042], ['g', 1027, 1036, 1040, 1050],
  ['r', 985, 990, 1020, 1020], ['g', 995, 998, 1004, 1006], ['r', 967, 979, 1007, 1007], ['g', 982, 985, 990, 992],
  ['s', 919, 919, 925, 925], ['s', 920, 920, 926, 926], ['g', 850, 850, 856, 893], ['s', 845, 847, 855, 855],
  ['s', 850, 863, 879, 882], ['g', 857, 864, 870, 880], ['s', 849, 856, 870, 885], ['r', 845, 845, 864, 864],
  ['g', 842, 850, 863, 880], ['r', 817, 817, 867, 867], ['g', 812, 823, 845, 860], ['g', 845, 848, 860, 862],
  ['r', 828, 836, 860, 860]
]);

// net volume of large orders
dash('net', 305, '#e2e2e2', '4 4');
const net = { 0: 398, 1: 312, 2: 274, 3: 300, 4: 232, 5: 268, 6: 262, 7: 262, 8: 262, 9: 236, 10: 298, 13: 272, 14: 318,
  16: 272, 18: 265, 20: 216, 22: 563, 24: 270, 25: 297, 26: 300, 29: 216, 30: 264, 31: 320 };
for (const i in net) {
  const y = net[i];
  add('net', 'rect', { x: x(+i) - 16, y: Math.min(y, 284), width: 32, height: Math.abs(y - 284), fill: y > 284 ? '#2f9a20' : '#e62e32' });
}
dash('net', 284, '#d8363c', 'none', 2);
line('net', '#e8743c', '52,322 190,323 235,298 282,275 350,262 480,258 557,268 695,278 832,282 925,285 970,263 1015,262 1062,318 1107,321 1153,317 1199,332 1245,339 1291,290 1337,284 1383,278 1427,270 1519,268');
line('net', '#4aa8de', '52,290 200,297 330,288 511,264 695,275 925,285 1015,275 1062,302 1153,300 1245,297 1291,303 1383,298 1427,305 1473,308 1519,278');
line('net', '#222', '52,284 400,286 925,285 970,272 1015,272 1062,285 1245,287 1519,290', 3);

// turnover
dash('vol', 863, '#e2e2e2', '4 4');
const vol = [-1025, -1101, -1067, 1092, -1055, -1058, 1072, -1095, -1092, -1080, 1087, 1098, 1092, -1106, 1095, 1097, -1082,
  1104, -1095, 1110, -1102, -1120, 773, -1101, -885, 1068, -987, -1047, 1032, -1030, 1012, 1071, -1047];
candles('vol', vol.map(v => [v < 0 ? 'r' : 'g', Math.abs(v), Math.abs(v), 1126, 1126]));
line('vol', '#111', '52,1068 144,1072 325,1066 440,1075 557,1085 740,1095 925,1097 970,1097 1015,1103 1062,1038 1107,1037 1153,997 1199,987 1245,960 1291,1017 1337,1003 1383,1030 1427,1020 1473,1038 1519,1035');
line('vol', '#e0a41e', '52,1073 235,1072 325,1066 500,1078 740,1088 925,1092 1015,1098 1062,1065 1107,1063 1153,1045 1245,1033 1337,1020 1427,1003 1473,997 1519,1025', 3);

// cost distribution
add('profile', 'polygon', { fill: '#4690ee', points: '47,88 188,88 200,110 226,140 222,160 200,180 170,203 205,205 205,212 238,212 238,220 270,220 270,229 312,229 312,236 360,236 360,242 392,242 392,248 433,248 433,260 47,260' });
add('profile', 'polygon', { fill: '#e82f30', points: '47,259 425,260 437,272 483,283 530,288 606,292 606,297 680,298 680,303 1010,303 1025,315 1108,318 1108,323 1240,324 1255,331 1281,331 1281,338 1240,340 1180,346 1240,350 1255,360 1225,366 1100,368 980,370 980,376 815,377 815,382 660,383 650,388 500,390 390,395 370,402 310,405 280,415 265,427 230,430 190,437 215,455 245,463 245,471 155,473 185,485 235,490 285,500 355,503 435,510 520,517 555,522 555,528 530,534 1058,534 1058,542 428,542 395,553 437,573 437,579 400,583 375,603 400,605 380,620 350,628 350,635 300,640 258,655 240,673 265,685 320,697 365,710 390,720 440,727 500,738 510,744 510,750 440,753 460,768 497,783 497,790 440,793 370,800 305,805 248,812 190,820 180,845 220,860 210,880 182,893 203,912 203,920 165,935 172,952 130,962 105,970 80,987 105,1000 125,1020 123,1055 137,1085 115,1107 103,1132 80,1152 80,1190 60,1212 60,1235 65,1243 47,1243' });
dash('profile', 391, '#e6a526', '9 6', 2.5);
```
